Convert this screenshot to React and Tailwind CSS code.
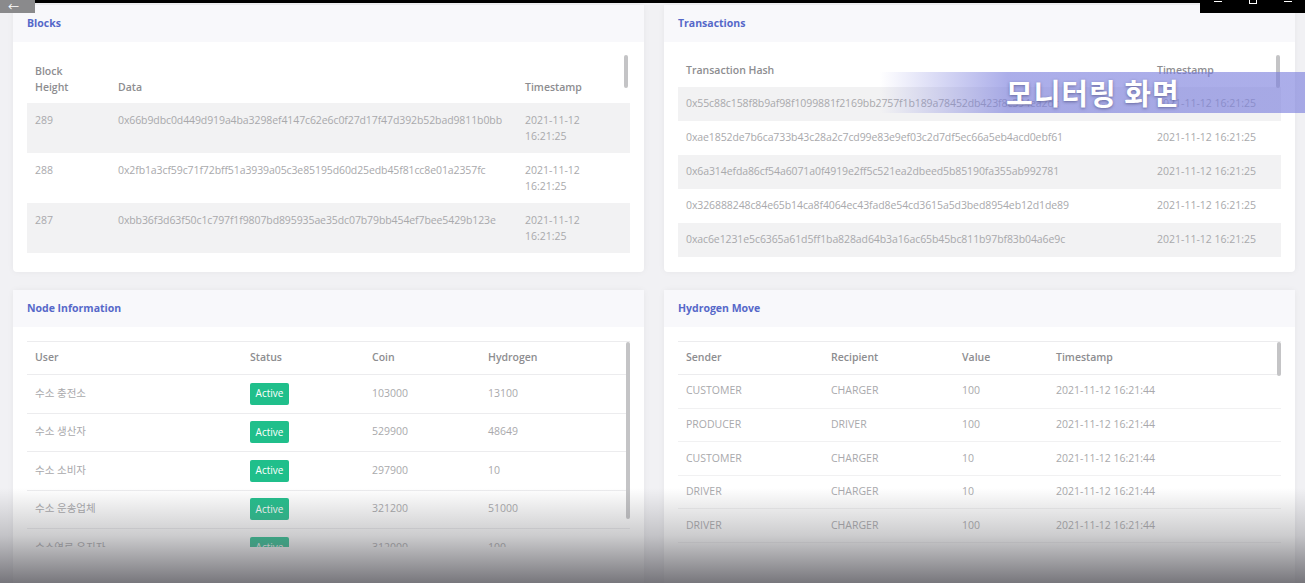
import React from 'react';

const font = { fontFamily: '"Open Sans", "Noto Sans CJK KR", sans-serif' };

const blocks = [
    ['289', '0x66b9dbc0d449d919a4ba3298ef4147c62e6c0f27d17f47d392b52bad9811b0bb'],
    ['288', '0x2fb1a3cf59c71f72bff51a3939a05c3e85195d60d25edb45f81cc8e01a2357fc'],
    ['287', '0xbb36f3d63f50c1c797f1f9807bd895935ae35dc07b79bb454ef7bee5429b123e'],
];

const txs = [
    '0x55c88c158f8b9af98f1099881f2169bb2757f1b189a78452db423f8c594ea2dc',
    '0xae1852de7b6ca733b43c28a2c7cd99e83e9ef03c2d7df5ec66a5eb4acd0ebf61',
    '0x6a314efda86cf54a6071a0f4919e2ff5c521ea2dbeed5b85190fa355ab992781',
    '0x326888248c84e65b14ca8f4064ec43fad8e54cd3615a5d3bed8954eb12d1de89',
    '0xac6e1231e5c6365a61d5ff1ba828ad64b3a16ac65b45bc811b97bf83b04a6e9c',
];

const nodes = [
    ['수소 충전소', '103000', '13100'],
    ['수소 생산자', '529900', '48649'],
    ['수소 소비자', '297900', '10'],
    ['수소 운송업체', '321200', '51000'],
    ['수소연료 유지자', '312000', '100'],
];

const moves = [
    ['CUSTOMER', 'CHARGER', '100'],
    ['PRODUCER', 'DRIVER', '100'],
    ['CUSTOMER', 'CHARGER', '10'],
    ['DRIVER', 'CHARGER', '10'],
    ['DRIVER', 'CHARGER', '100'],
    ['CUSTOMER', 'CHARGER', '10'],
];

function Card({ title, children, className }) {
    return (
        <div className={`bg-white rounded-sm shadow-[0_0_6px_rgba(0,0,0,0.05)] flex flex-col ${className || ''}`}>
            <div className="h-[37px] shrink-0 bg-[#f8f8fb] flex items-center px-[14px] text-[10.5px] font-bold text-[#5668c9]">
                {title}
            </div>
            {children}
        </div>
    );
}

function Thumb({ className }) {
    return <div className={`absolute w-[4px] rounded-full bg-[#c4c4c6] ${className}`} />;
}

export default function App() {
    return (
        <div className="relative w-[1305px] h-[583px] overflow-hidden bg-[#f1f1f4]" style={font}>
            <div className="grid grid-cols-[631px_631px] gap-x-[20px] gap-y-[18px] pl-[13px] pt-[5px]">
                {/* Blocks */}
                <Card title="Blocks" className="h-[267px]">
                    <div className="relative mx-[14px] mt-[13px] text-[10.5px]">
                        <div className="grid grid-cols-[91px_407px_1fr] h-[48px] items-center font-semibold text-[#8d8d90] leading-[16px]">
                            <div className="pl-[8px]">Block<br />Height</div>
                            <div className="self-end pb-[8px]">Data</div>
                            <div className="self-end pb-[8px]">Timestamp</div>
                        </div>
                        {blocks.map((b, i) => (
                            <div key={b[0]} className={`grid grid-cols-[91px_407px_1fr] h-[50px] items-center text-[#a9a9ac] leading-[16px] ${i % 2 === 0 ? 'bg-[#f2f2f3]' : ''}`}>
                                <div className="pl-[8px] self-start pt-[9px]">{b[0]}</div>
                                <div className="self-start pt-[9px] tracking-[-0.1px]">{b[1]}</div>
                                <div>2021-11-12<br />16:21:25</div>
                            </div>
                        ))}
                        <Thumb className="right-[2px] top-0 h-[33px]" />
                    </div>
                </Card>

                {/* Transactions */}
                <Card title="Transactions" className="h-[267px]">
                    <div className="relative mx-[14px] mt-[13px] text-[10.5px]">
                        <div className="grid grid-cols-[479px_1fr] h-[32px] items-center font-semibold text-[#8d8d90]">
                            <div className="pl-[8px]">Transaction Hash</div>
                            <div>Timestamp</div>
                        </div>
                        {txs.map((t, i) => (
                            <div key={t} className={`grid grid-cols-[479px_1fr] h-[34px] items-center text-[#a9a9ac] ${i % 2 === 0 ? 'bg-[#f2f2f3]' : ''}`}>
                                <div className="pl-[8px] tracking-[-0.1px]">{t}</div>
                                <div>2021-11-12 16:21:25</div>
                            </div>
                        ))}
                        <Thumb className="right-[1px] top-0 h-[33px]" />
                    </div>
                </Card>

                {/* Node Information */}
                <Card title="Node Information" className="h-[320px]">
                    <div className="relative mx-[14px] mt-[14px] h-[206px] overflow-hidden text-[10.5px] border-t border-[#ececee]">
                        <div className="grid grid-cols-[223px_122px_116px_1fr] h-[33px] items-center font-semibold text-[#8d8d90] border-b border-[#ececee]">
                            <div className="pl-[8px]">User</div>
                            <div>Status</div>
                            <div>Coin</div>
                            <div>Hydrogen</div>
                        </div>
                        {nodes.map((n) => (
                            <div key={n[0]} className="grid grid-cols-[223px_122px_116px_1fr] h-[38.5px] items-center text-[#a9a9ac] border-b border-[#ececee]">
                                <div className="pl-[8px]">{n[0]}</div>
                                <div>
                                    <span className="inline-flex items-center justify-center w-[39px] h-[22px] rounded-[2px] bg-[#20bf8b] text-white text-[10px]">Active</span>
                                </div>
                                <div>{n[1]}</div>
                                <div>{n[2]}</div>
                            </div>
                        ))}
                        <Thumb className="right-[0px] top-0 h-[177px]" />
                    </div>
                </Card>

                {/* Hydrogen Move */}
                <Card title="Hydrogen Move" className="h-[320px]">
                    <div className="relative mx-[14px] mt-[14px] h-[202px] overflow-hidden text-[10.5px] border-t border-[#ececee]">
                        <div className="grid grid-cols-[153px_131px_94px_1fr] h-[33px] items-center font-semibold text-[#8d8d90] border-b border-[#ececee]">
                            <div className="pl-[8px]">Sender</div>
                            <div>Recipient</div>
                            <div>Value</div>
                            <div>Timestamp</div>
                        </div>
                        {moves.map((m, i) => (
                            <div key={i} className="grid grid-cols-[153px_131px_94px_1fr] h-[33.6px] items-center text-[#a9a9ac] border-b border-[#f1f1f2]">
                                <div className="pl-[8px]">{m[0]}</div>
                                <div>{m[1]}</div>
                                <div>{m[2]}</div>
                                <div>2021-11-12 16:21:44</div>
                            </div>
                        ))}
                        <Thumb className="right-[0px] top-0 h-[34px]" />
                    </div>
                </Card>
            </div>

            {/* video overlays */}
            <div className="absolute left-0 top-0 w-full h-[3px] bg-black" />
            <div className="absolute left-0 top-0 w-[35px] h-[13px] bg-[#8a8a8c] flex items-center pl-[8px] text-white text-[11px] leading-none">←</div>
            <div className="absolute right-0 top-0 w-[105px] h-[13px] bg-black flex items-start justify-around text-white text-[10px] leading-none">
                <span className="mt-[1px] w-[8px] h-[1px] bg-white" />
                <span className="-mt-[3px] w-[8px] h-[7px] border border-white" />
                <span className="mt-[1px] w-[8px] h-[5px] border-t border-white" />
            </div>

            <div className="absolute left-[880px] top-[72px] w-[425px] h-[41px] bg-gradient-to-r from-[rgba(120,124,220,0)] via-[rgba(120,124,220,0.62)] via-[30%] to-[rgba(120,124,220,0.62)] flex items-center pl-[126px]">
                <span className="text-white text-[29px] font-bold leading-none tracking-[1px] [text-shadow:0_1px_3px_rgba(40,40,90,0.5)]" style={{ fontFamily: '"Noto Sans CJK KR", sans-serif' }}>
                    모니터링 화면
                </span>
            </div>

            <div className="absolute left-0 bottom-0 w-full h-[95px] bg-gradient-to-b from-[rgba(110,110,115,0)] via-[rgba(110,110,115,0.35)] to-[rgba(105,104,110,0.9)]" />
        </div>
    );
}
